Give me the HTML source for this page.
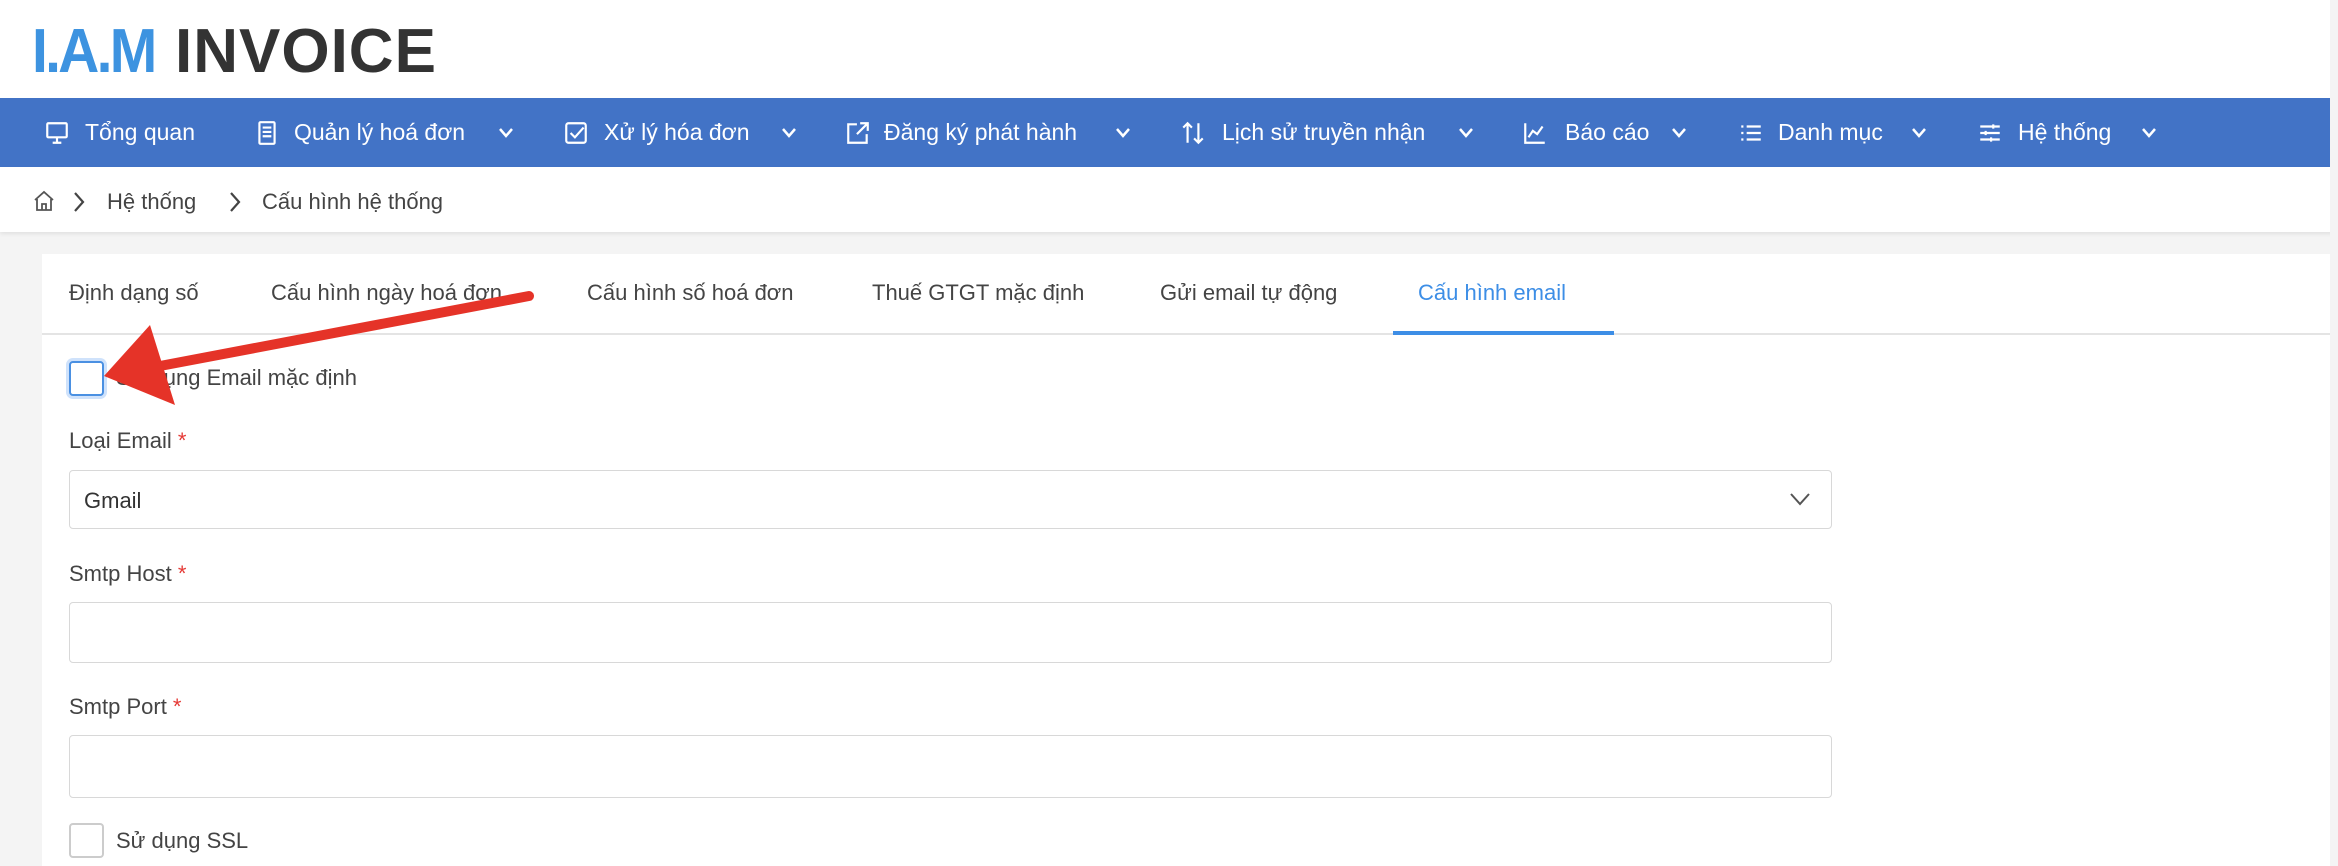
<!DOCTYPE html>
<html><head><meta charset="utf-8"><style>
*{margin:0;padding:0;box-sizing:border-box}
body{width:2338px;height:866px;overflow:hidden;background:#f4f4f4;font-family:"Liberation Sans","Noto Sans CJK SC",sans-serif;position:relative}
.abs{position:absolute;white-space:nowrap}
.hdr{position:absolute;left:0;top:0;width:2338px;height:98px;background:#fff}
.nav{position:absolute;left:0;top:98px;width:2338px;height:69px;background:#4273c6}
.nav .abs{color:#fff;font-size:23px;top:21px}
.crumb{position:absolute;left:0;top:167px;width:2338px;height:65px;background:#fff;box-shadow:0 2px 4px rgba(0,0,0,.08)}
.card{position:absolute;left:42px;top:254px;width:2288px;height:612px;background:#fff}
.tab{font-size:22px;color:#444;top:280px}
.lbl{font-size:22px;color:#444}
.box{position:absolute;left:69px;width:1763px;border:1.5px solid #d8d8d8;border-radius:4px;background:#fff}
.cb{position:absolute;left:69px;width:35px;height:35px;border:2px solid #bbb;border-radius:4px;background:#fff}
.red{color:#e53935}
svg.i{position:absolute}
</style></head><body>
<div class="hdr"></div>
<div class="abs" style="left:32px;top:16px;font-size:62px;font-weight:bold;color:#3d93e0;letter-spacing:-3px;transform:scaleX(0.92);transform-origin:left">I.A.M</div>
<div class="abs" style="left:175px;top:16px;font-size:62px;font-weight:bold;color:#333;letter-spacing:1px">INVOICE</div>
<div class="nav">
<svg class="i" style="left:44px;top:22px" width="26" height="26" viewBox="0 0 24 24" fill="none" stroke="#fff" stroke-width="2"><rect x="3" y="3" width="18" height="13" rx="1"/><path d="M12 16v5M8 21h8"/></svg>
<div class="abs" style="left:85px">Tổng quan</div>
<svg class="i" style="left:254px;top:22px" width="26" height="26" viewBox="0 0 24 24" fill="none" stroke="#fff" stroke-width="2"><rect x="5" y="2" width="14" height="20" rx="1"/><path d="M8 7h8M8 11h8M8 15h8"/></svg>
<div class="abs" style="left:294px">Quản lý hoá đơn</div>
<svg class="i" style="left:497px;top:28px" width="18" height="14" viewBox="0 0 18 14" fill="none" stroke="#fff" stroke-width="2.5"><path d="M3 3l6 7 6-7"/></svg>
<svg class="i" style="left:563px;top:22px" width="26" height="26" viewBox="0 0 24 24" fill="none" stroke="#fff" stroke-width="2"><rect x="3" y="3" width="18" height="18" rx="2"/><path d="M7 12l4 4 8-9"/></svg>
<div class="abs" style="left:604px">Xử lý hóa đơn</div>
<svg class="i" style="left:780px;top:28px" width="18" height="14" viewBox="0 0 18 14" fill="none" stroke="#fff" stroke-width="2.5"><path d="M3 3l6 7 6-7"/></svg>
<svg class="i" style="left:845px;top:22px" width="26" height="26" viewBox="0 0 24 24" fill="none" stroke="#fff" stroke-width="2"><path d="M20 13v8H3V4h8M14 3h7v7M21 3L11 13"/></svg>
<div class="abs" style="left:884px">Đăng ký phát hành</div>
<svg class="i" style="left:1114px;top:28px" width="18" height="14" viewBox="0 0 18 14" fill="none" stroke="#fff" stroke-width="2.5"><path d="M3 3l6 7 6-7"/></svg>
<svg class="i" style="left:1180px;top:22px" width="26" height="26" viewBox="0 0 24 24" fill="none" stroke="#fff" stroke-width="2"><path d="M7 21V3M3 7l4-4 4 4M17 3v18M13 17l4 4 4-4"/></svg>
<div class="abs" style="left:1222px">Lịch sử truyền nhận</div>
<svg class="i" style="left:1457px;top:28px" width="18" height="14" viewBox="0 0 18 14" fill="none" stroke="#fff" stroke-width="2.5"><path d="M3 3l6 7 6-7"/></svg>
<svg class="i" style="left:1522px;top:22px" width="26" height="26" viewBox="0 0 24 24" fill="none" stroke="#fff" stroke-width="2"><path d="M3 3v18h18M6 16l4-6 4 3 5-7"/></svg>
<div class="abs" style="left:1565px">Báo cáo</div>
<svg class="i" style="left:1670px;top:28px" width="18" height="14" viewBox="0 0 18 14" fill="none" stroke="#fff" stroke-width="2.5"><path d="M3 3l6 7 6-7"/></svg>
<svg class="i" style="left:1738px;top:22px" width="26" height="26" viewBox="0 0 24 24" fill="none" stroke="#fff" stroke-width="2"><path d="M3 6h2M8 6h13M3 12h2M8 12h13M3 18h2M8 18h13"/></svg>
<div class="abs" style="left:1778px">Danh mục</div>
<svg class="i" style="left:1910px;top:28px" width="18" height="14" viewBox="0 0 18 14" fill="none" stroke="#fff" stroke-width="2.5"><path d="M3 3l6 7 6-7"/></svg>
<svg class="i" style="left:1977px;top:22px" width="26" height="26" viewBox="0 0 24 24" fill="none" stroke="#fff" stroke-width="2"><path d="M3 6h18M3 12h18M3 18h18M15 4v4M8 10v4M13 16v4"/></svg>
<div class="abs" style="left:2018px">Hệ thống</div>
<svg class="i" style="left:2140px;top:28px" width="18" height="14" viewBox="0 0 18 14" fill="none" stroke="#fff" stroke-width="2.5"><path d="M3 3l6 7 6-7"/></svg>
</div>
<div class="crumb">
<svg class="i" style="left:32px;top:22px" width="24" height="24" viewBox="0 0 24 24" fill="none" stroke="#555" stroke-width="1.8"><path d="M3 11l9-8 9 8M5 10v11h14V10M10 21v-6h4v6"/></svg>
<svg class="i" style="left:72px;top:24px" width="14" height="22" viewBox="0 0 14 22" fill="none" stroke="#444" stroke-width="2.2"><path d="M3 2l8 9-8 9"/></svg>
<div class="abs" style="left:107px;top:22px;font-size:22px;color:#444">Hệ thống</div>
<svg class="i" style="left:228px;top:24px" width="14" height="22" viewBox="0 0 14 22" fill="none" stroke="#444" stroke-width="2.2"><path d="M3 2l8 9-8 9"/></svg>
<div class="abs" style="left:262px;top:22px;font-size:22px;color:#444">Cấu hình hệ thống</div>
</div>
<div class="card"></div>
<div style="position:absolute;left:42px;top:333px;width:2288px;height:2px;background:#e4e4e4"></div>
<div style="position:absolute;left:2330px;top:0;width:8px;height:866px;background:#f4f4f4"></div>
<div class="abs tab" style="left:69px">Định dạng số</div>
<div class="abs tab" style="left:271px">Cấu hình ngày hoá đơn</div>
<div class="abs tab" style="left:587px">Cấu hình số hoá đơn</div>
<div class="abs tab" style="left:872px">Thuế GTGT mặc định</div>
<div class="abs tab" style="left:1160px">Gửi email tự động</div>
<div class="abs tab" style="left:1418px;color:#3d8ee6">Cấu hình email</div>
<div style="position:absolute;left:1393px;top:331px;width:221px;height:4px;background:#3d8ee6"></div>
<div class="cb" style="top:361px;border-color:#4a90e2;box-shadow:0 0 0 3px #cfe2fb"></div>
<div class="abs lbl" style="left:116px;top:365px">Sử dụng Email mặc định</div>
<div class="abs lbl" style="left:69px;top:428px">Loại Email <span class="red">*</span></div>
<div class="box" style="top:470px;height:59px"></div>
<div class="abs lbl" style="left:84px;top:488px;color:#333">Gmail</div>
<svg class="i" style="left:1788px;top:489px" width="24" height="20" viewBox="0 0 24 20" fill="none" stroke="#555" stroke-width="2"><path d="M3 5l9 10 9-10"/></svg>
<div class="abs lbl" style="left:69px;top:561px">Smtp Host <span class="red">*</span></div>
<div class="box" style="top:602px;height:61px"></div>
<div class="abs lbl" style="left:69px;top:694px">Smtp Port <span class="red">*</span></div>
<div class="box" style="top:735px;height:63px"></div>
<div class="cb" style="top:823px;border-color:#ccc"></div>
<div class="abs lbl" style="left:116px;top:828px">Sử dụng SSL</div>
<svg class="i" style="left:0;top:0" width="2338" height="866" viewBox="0 0 2338 866">
<line x1="529" y1="296" x2="160" y2="366" stroke="#e53328" stroke-width="10" stroke-linecap="round"/>
<polygon points="104,376 150,325 175,405" fill="#e53328"/>
</svg>
</body></html>
